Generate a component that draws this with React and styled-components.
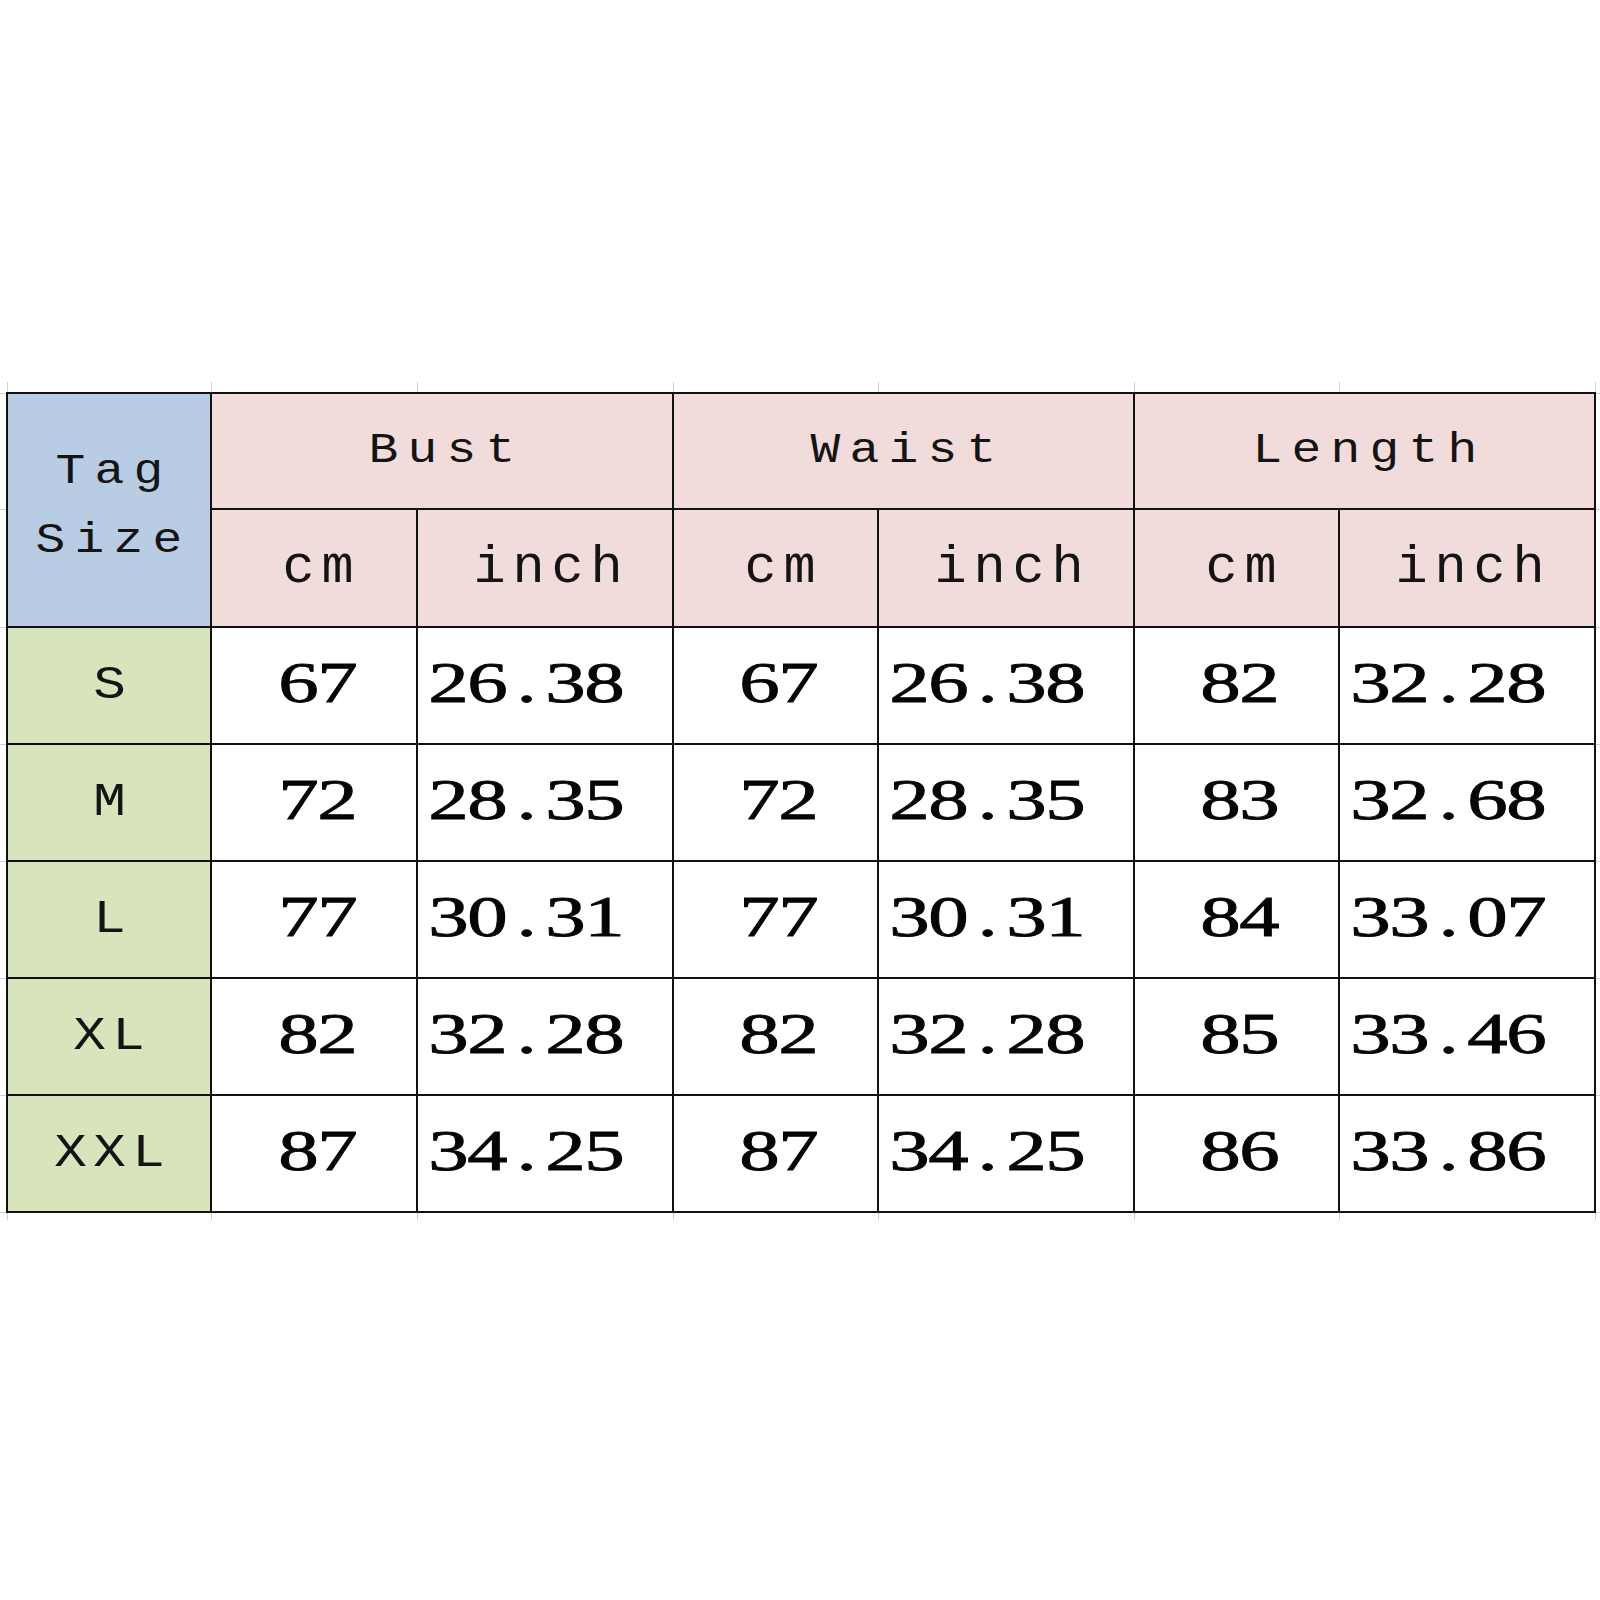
import React from "react";
import styled, { createGlobalStyle } from "styled-components";

const Global = createGlobalStyle`
  html, body { margin: 0; padding: 0; background: #ffffff; }
  body { width: 1600px; height: 1600px; overflow: hidden; }
`;

const COLS = [204, 206, 256, 205, 256, 205, 256];
const ROWS = [116, 118, 117, 117, 117, 117, 117];

// faint spreadsheet gridlines that peek out around the table
const TICK = "#c9d2e3";
const vLines = [7, 211, 417, 673, 878, 1134, 1339, 1595];
const hLines = [11, 127, 245, 362, 479, 596, 713, 830];
const stops = (arr) => {
  let out = [];
  let prev = 0;
  arr.forEach((p) => {
    out.push(`transparent ${prev}px ${p}px`, `${TICK} ${p}px ${p + 1}px`);
    prev = p + 1;
  });
  out.push(`transparent ${prev}px`);
  return out.join(", ");
};
const gridBg = `linear-gradient(to right, ${stops(vLines)}), linear-gradient(to bottom, ${stops(hLines)})`;

const Sheet = styled.div`
  margin-top: 382px;
  width: 1600px;
  padding: 10px 4px 7px 6px;
  box-sizing: border-box;
  background-image: ${(p) => p.$bg};
`;

const Table = styled.div`
  display: inline-grid;
  grid-template-columns: ${COLS.map((c) => `${c}px`).join(" ")};
  grid-template-rows: ${ROWS.map((r) => `${r}px`).join(" ")};
  border-top: 2px solid #111;
  border-left: 2px solid #111;
  background: #ffffff;
  vertical-align: top;
`;

const Cell = styled.div`
  box-sizing: border-box;
  border-right: 2px solid #111;
  border-bottom: 2px solid #111;
  background: ${(p) => p.$bg || "#ffffff"};
  grid-column: ${(p) => p.$col || "auto"};
  grid-row: ${(p) => p.$row || "auto"};
  display: flex;
  flex-direction: column;
  align-items: ${(p) => (p.$left ? "flex-start" : "center")};
  justify-content: center;
  padding: ${(p) => p.$pad || "0"};
  color: #111;
  overflow: hidden;
`;

const MonoText = styled.div`
  font-family: "Liberation Mono", "Courier New", monospace;
  font-size: ${(p) => p.$size}px;
  line-height: ${(p) => p.$lh || 1};
  color: #141414;
  display: flex;
  flex-direction: column;
  align-items: center;
`;

const NumText = styled.div`
  font-family: "Liberation Serif", "Times New Roman", serif;
  font-weight: 400;
  font-size: 57px;
  line-height: 1;
  color: #050505;
  -webkit-text-stroke: 0.8px #050505;
`;

const Word = styled.span`
  display: inline-flex;
  white-space: pre;
`;

const Glyph = styled.span`
  display: inline-block;
  width: ${(p) => p.$pitch}px;
  text-align: center;
  transform: ${(p) => (p.$stretch ? `scaleX(${p.$stretch})` : "none")};
`;

function Spaced({ text, pitch = 39, stretch }) {
  return (
    <Word>
      {text.split("").map((c, i) => (
        <Glyph key={i} $pitch={pitch} $stretch={stretch}>
          {c}
        </Glyph>
      ))}
    </Word>
  );
}

const BLUE = "#b8cce4";
const PINK = "#f2dcdb";
const GREEN = "#d8e4bc";

const groups = ["Bust", "Waist", "Length"];
const data = [
  ["S", "67", "26.38", "67", "26.38", "82", "32.28"],
  ["M", "72", "28.35", "72", "28.35", "83", "32.68"],
  ["L", "77", "30.31", "77", "30.31", "84", "33.07"],
  ["XL", "82", "32.28", "82", "32.28", "85", "33.46"],
  ["XXL", "87", "34.25", "87", "34.25", "86", "33.86"],
];

const MONO_STRETCH = 1.18;
const NUM_STRETCH = 1.42;

export default function App() {
  return (
    <>
      <Global />
      <Sheet $bg={gridBg}>
        <Table>
          <Cell $bg={BLUE} $row="1 / span 2" $col="1" $pad="0 0 7px 0">
            <MonoText $size={42} $lh="69px">
              <Spaced text="Tag" stretch={MONO_STRETCH} />
              <Spaced text="Size" stretch={MONO_STRETCH} />
            </MonoText>
          </Cell>
          {groups.map((g, i) => (
            <Cell key={g} $bg={PINK} $row="1" $col={`${2 + i * 2} / span 2`}>
              <MonoText $size={42}>
                <Spaced text={g} stretch={MONO_STRETCH} />
              </MonoText>
            </Cell>
          ))}
          {groups.map((g, i) => (
            <React.Fragment key={g + "u"}>
              <Cell $bg={PINK} $row="2" $col={`${2 + i * 2}`} $pad="0 0 0 8px">
                <MonoText $size={51}>
                  <Spaced text="cm" stretch={1.05} />
                </MonoText>
              </Cell>
              <Cell $bg={PINK} $row="2" $col={`${3 + i * 2}`} $pad="0 0 0 6px">
                <MonoText $size={51}>
                  <Spaced text="inch" stretch={1.05} />
                </MonoText>
              </Cell>
            </React.Fragment>
          ))}
          {data.map((row) =>
            row.map((v, j) =>
              j === 0 ? (
                <Cell key={row[0] + j} $bg={GREEN}>
                  <MonoText $size={46}>
                    <Spaced text={v} stretch={MONO_STRETCH} />
                  </MonoText>
                </Cell>
              ) : j % 2 === 1 ? (
                <Cell key={row[0] + j} $pad="0 0 6px 7px">
                  <NumText>
                    <Spaced text={v} stretch={NUM_STRETCH} />
                  </NumText>
                </Cell>
              ) : (
                <Cell key={row[0] + j} $left $pad="0 0 6px 11px">
                  <NumText>
                    <Spaced text={v} stretch={NUM_STRETCH} />
                  </NumText>
                </Cell>
              )
            )
          )}
        </Table>
      </Sheet>
    </>
  );
}
